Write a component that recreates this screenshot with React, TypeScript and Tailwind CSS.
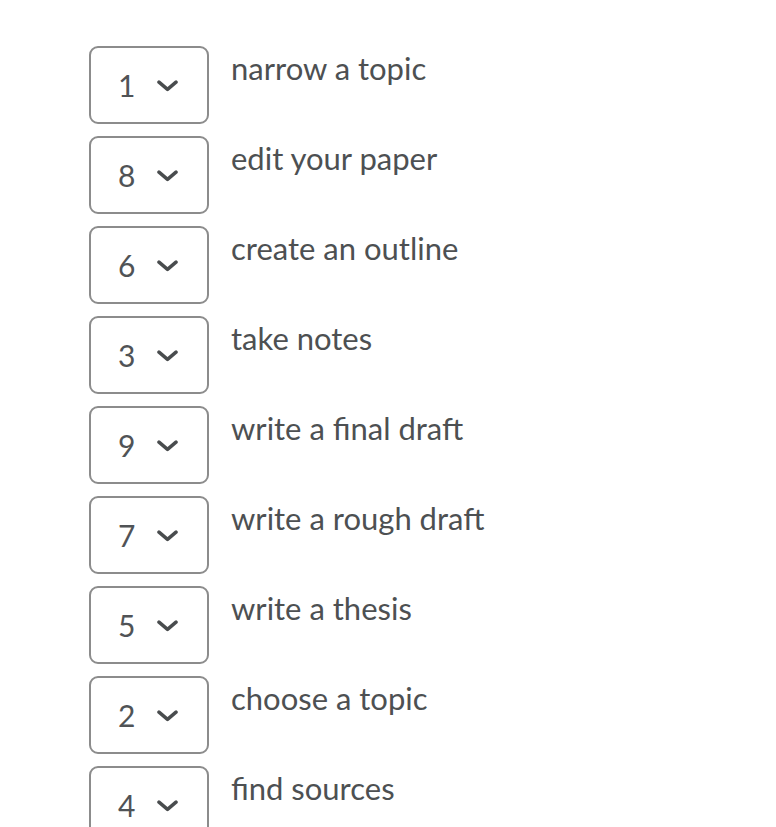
const items = [
  { value: "1", label: "narrow a topic" },
  { value: "8", label: "edit your paper" },
  { value: "6", label: "create an outline" },
  { value: "3", label: "take notes" },
  { value: "9", label: "write a final draft" },
  { value: "7", label: "write a rough draft" },
  { value: "5", label: "write a thesis" },
  { value: "2", label: "choose a topic" },
  { value: "4", label: "find sources" },
];

function Chevron() {
  return (
    <svg width="21" height="12" viewBox="0 0 21 12" fill="none" aria-hidden="true">
      <path
        d="M2 2.2 L10.5 9.4 L19 2.2"
        stroke="#494c4e"
        strokeWidth="3.5"
        strokeLinecap="round"
        strokeLinejoin="round"
      />
    </svg>
  );
}

function OrderSelect({ value }: { value: string }) {
  return (
    <div className="flex h-[78px] w-[120px] shrink-0 items-center rounded-[9px] border-2 border-[#8c8c8c] bg-white pl-[27px]">
      <span className="w-[39px] text-[30px] leading-none text-[#505356]">{value}</span>
      <span className="mt-[2px] flex">
        <Chevron />
      </span>
    </div>
  );
}

export default function App() {
  return (
    <div
      className="min-h-[827px] w-[776px] overflow-hidden bg-white pl-[89px] pt-[46px]"
      style={{ fontFamily: "Lato, 'Open Sans', sans-serif" }}
    >
      <ul className="flex flex-col gap-[12px]">
        {items.map((item) => (
          <li key={item.label} className="flex items-start">
            <OrderSelect value={item.value} />
            <span className="ml-[22px] mt-[4px] text-[31px] leading-[36px] text-[#4d5052]">
              {item.label}
            </span>
          </li>
        ))}
      </ul>
    </div>
  );
}
